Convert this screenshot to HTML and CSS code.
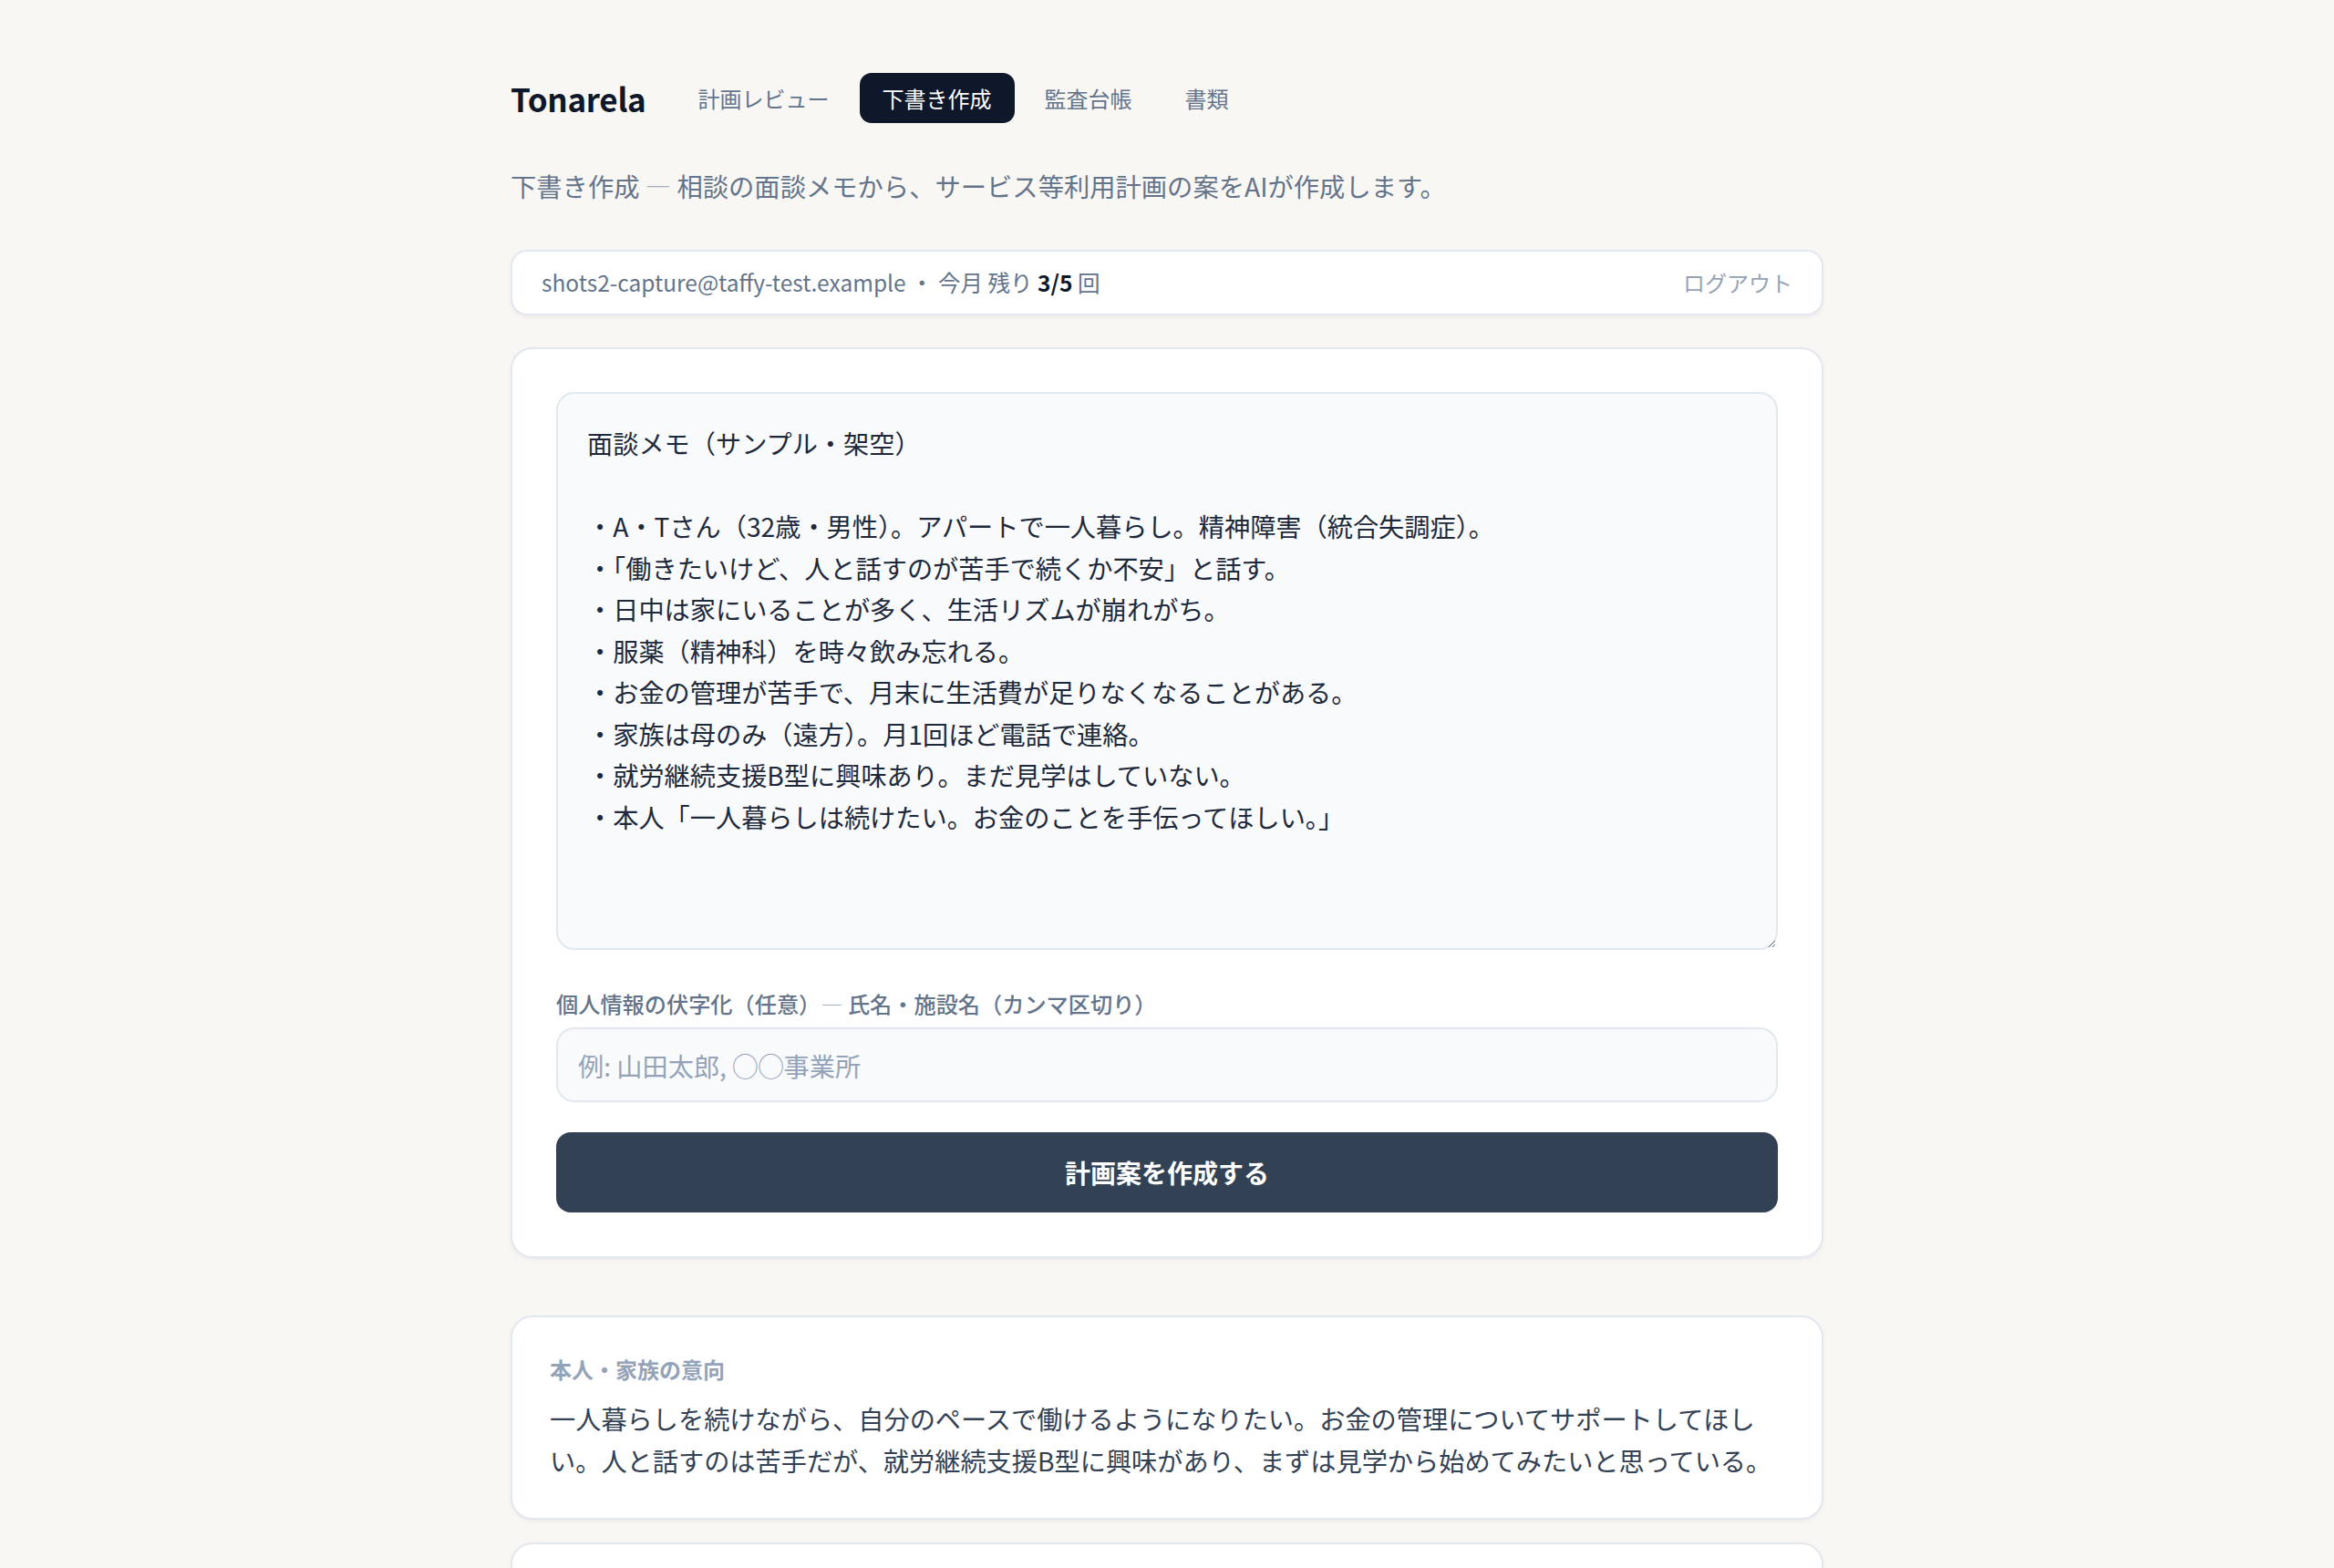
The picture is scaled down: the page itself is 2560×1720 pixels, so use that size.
FILE: index.html
```html
<!DOCTYPE html>
<html lang="ja">
<head>
  <meta charset="UTF-8" />
  <meta name="viewport" content="width=device-width, initial-scale=1.0"/>
  <title>下書き作成 - Tonarela</title>
  <link rel="stylesheet" href="styles.css">
</head>
<body>
  <div class="page">
    <header class="header">
      <div class="logo">Tonarela</div>
      <nav class="tabs">
        <a class="tab" href="#">計画レビュー</a>
        <a class="tab active" href="#">下書き作成</a>
        <a class="tab" href="#">監査台帳</a>
        <a class="tab" href="#">書類</a>
      </nav>
    </header>

    <p class="lead">下書き作成 <span class="dash">—</span> 相談の面談メモから、サービス等利用計画の案をAIが作成します。</p>

    <div class="account">
      <div class="account-info">shots2-capture@taffy-test.example ・ 今月 残り <b>3/5</b> 回</div>
      <button class="logout">ログアウト</button>
    </div>

    <div class="card form-card">
      <textarea class="memo" id="memo">面談メモ（サンプル・架空）

・A・Tさん（32歳・男性）。アパートで一人暮らし。精神障害（統合失調症）。
・「働きたいけど、人と話すのが苦手で続くか不安」と話す。
・日中は家にいることが多く、生活リズムが崩れがち。
・服薬（精神科）を時々飲み忘れる。
・お金の管理が苦手で、月末に生活費が足りなくなることがある。
・家族は母のみ（遠方）。月1回ほど電話で連絡。
・就労継続支援B型に興味あり。まだ見学はしていない。
・本人「一人暮らしは続けたい。お金のことを手伝ってほしい。」</textarea>

      <label class="field-label" for="mask">個人情報の伏字化（任意）<span class="dash">—</span> 氏名・施設名（カンマ区切り）</label>
      <input class="field" id="mask" type="text" placeholder="例: 山田太郎, ◯◯事業所">

      <button class="submit">計画案を作成する</button>
    </div>

    <div class="card result-card">
      <div class="result-label">本人・家族の意向</div>
      <p class="result-text">一人暮らしを続けながら、自分のペースで働けるようになりたい。お金の管理についてサポートしてほしい。人と話すのは苦手だが、就労継続支援B型に興味があり、まずは見学から始めてみたいと思っている。</p>
    </div>

    <div class="card result-card next">
      <div class="result-label">総合的な援助の方針</div>
      <p class="result-text">地域での一人暮らしを継続できるよう、生活リズムの安定と金銭管理の支援を行う。</p>
    </div>
  </div>
</body>
</html>
```

FILE: styles.css
```css
body {
  margin: 0;
  background: #f8f7f4;
  font-family: "Noto Sans CJK JP", "Noto Sans", sans-serif;
  color: #1e293b;
}
.page {
  max-width: 1440px;
  margin: 0 auto;
  padding-top: 80px;
}
.header {
  display: flex;
  align-items: center;
  gap: 32px;
}
.logo {
  font-size: 35px;
  font-weight: 700;
  color: #0f172a;
  letter-spacing: -0.3px;
}
.tabs {
  display: flex;
  gap: 8px;
}
.tab {
  font-size: 24px;
  line-height: 29px;
  padding: 13px 25px;
  border-radius: 13px;
  color: #64748b;
  text-decoration: none;
}
.tab.active {
  background: #0f172a;
  color: #ffffff;
}
.lead {
  font-size: 28.3px;
  line-height: 44px;
  color: #64748b;
  margin: 47px 0 48px;
}
.dash {
  color: #a3afc0;
}
.account {
  display: flex;
  justify-content: space-between;
  align-items: center;
  background: #ffffff;
  border: 2px solid #e2e8f0;
  border-radius: 18px;
  padding: 16px 32px;
  box-shadow: 0 2px 4px rgba(15, 23, 42, 0.05);
  font-size: 24.5px;
  line-height: 36px;
  color: #64748b;
}
.account b {
  color: #0f172a;
  font-weight: 700;
}
.logout {
  border: none;
  background: none;
  padding: 0;
  font: inherit;
  font-size: 24px;
  color: #94a3b8;
  cursor: pointer;
}
.card {
  background: #ffffff;
  border: 2px solid #e2e8f0;
  border-radius: 24px;
  box-shadow: 0 2px 5px rgba(15, 23, 42, 0.05);
}
.form-card {
  margin-top: 35px;
  padding: 47px 48px 48px;
  display: flex;
  flex-direction: column;
}
.memo {
  box-sizing: border-box;
  height: 612px;
  font-family: inherit;
  font-size: 28.2px;
  line-height: 45.5px;
  color: #1e293b;
  background: #f8fafc;
  border: 2px solid #e2e8f0;
  border-radius: 20px;
  padding: 31px 32px;
  resize: vertical;
  outline: none;
}
.field-label {
  margin-top: 41px;
  font-size: 24.2px;
  line-height: 36px;
  font-weight: 500;
  color: #64748b;
}
.field {
  box-sizing: border-box;
  margin-top: 8px;
  height: 82px;
  font-family: inherit;
  font-size: 28.2px;
  color: #1e293b;
  background: #f8fafc;
  border: 2px solid #e2e8f0;
  border-radius: 20px;
  padding: 0 22px;
  outline: none;
}
.field::placeholder {
  color: #94a3b8;
}
.submit {
  margin-top: 33px;
  height: 88px;
  border: none;
  border-radius: 16px;
  background: #334155;
  color: #ffffff;
  font-family: inherit;
  font-size: 28px;
  font-weight: 700;
  cursor: pointer;
}
.result-card {
  margin-top: 63px;
  padding: 40px 41px;
}
.result-card.next {
  margin-top: 25px;
}
.result-label {
  font-size: 24px;
  line-height: 34px;
  font-weight: 700;
  color: #94a3b8;
  margin-bottom: 14px;
}
.result-text {
  margin: 0;
  font-size: 28.2px;
  line-height: 46px;
  color: #334155;
}
```
